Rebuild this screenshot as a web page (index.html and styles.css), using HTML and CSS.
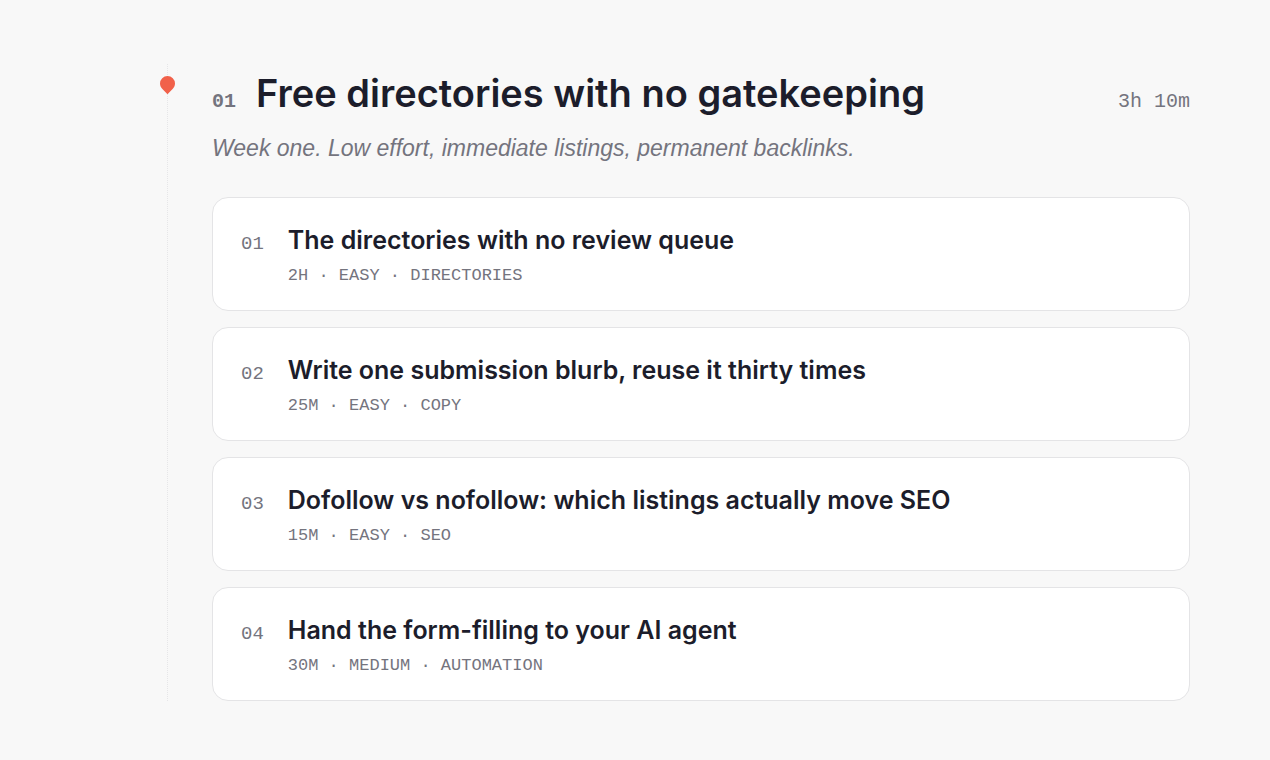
FILE: index.html
```
<!DOCTYPE html>
<html lang="en">
<head>
  <meta charset="UTF-8">
  <meta name="viewport" content="width=device-width, initial-scale=1.0">
  <title>Free directories with no gatekeeping</title>
  <link rel="stylesheet" href="styles.css">
</head>
<body>
  <main class="roadmap">
    <section class="stage">
      <div class="rail">
        <svg class="pin" width="15" height="19" viewBox="0 0 15 19" aria-hidden="true">
          <path d="M7.5 0A7.5 7.5 0 0 1 15 7.5C15 9.7 14.1 11.6 12.6 13L7.5 18.2L2.4 13C.9 11.6 0 9.7 0 7.5A7.5 7.5 0 0 1 7.5 0Z" fill="#f1614a"/>
        </svg>
      </div>
      <div class="content">
        <header class="stage-header">
          <span class="stage-number">01</span>
          <h1 class="stage-title">Free directories with no gatekeeping</h1>
          <span class="stage-time">3h 10m</span>
        </header>
        <p class="stage-intro">Week one. Low effort, immediate listings, permanent backlinks.</p>
        <div class="cards">
          <article class="card">
            <span class="card-number">01</span>
            <div>
              <h2 class="card-title">The directories with no review queue</h2>
              <p class="card-meta">2h · Easy · Directories</p>
            </div>
          </article>
          <article class="card">
            <span class="card-number">02</span>
            <div>
              <h2 class="card-title">Write one submission blurb, reuse it thirty times</h2>
              <p class="card-meta">25m · Easy · Copy</p>
            </div>
          </article>
          <article class="card">
            <span class="card-number">03</span>
            <div>
              <h2 class="card-title">Dofollow vs nofollow: which listings actually move SEO</h2>
              <p class="card-meta">15m · Easy · SEO</p>
            </div>
          </article>
          <article class="card">
            <span class="card-number">04</span>
            <div>
              <h2 class="card-title">Hand the form-filling to your AI agent</h2>
              <p class="card-meta">30m · Medium · Automation</p>
            </div>
          </article>
        </div>
      </div>
    </section>
  </main>
</body>
</html>
```
FILE: styles.css
```
:root {
  --bg: #f8f8f8;
  --line: #e4e4e6;
  --ink: #1c1d2b;
  --muted: #74747e;
  --heading: Inter, "Liberation Sans", sans-serif;
  --sans: "Liberation Sans", Arial, sans-serif;
  --mono: "Liberation Mono", monospace;
}
* {
  box-sizing: border-box;
}
body {
  margin: 0;
  background: var(--bg);
  color: var(--ink);
  font-family: var(--sans);
}
h1, h2, p {
  margin: 0;
}
h1, h2 {
  font-family: var(--heading);
  font-weight: 600;
}
.roadmap {
  padding: 64px 80px 58px 160px;
}

/* stage */
.stage {
  display: grid;
  grid-template-columns: 15px 1fr;
  column-gap: 37px;
}
.rail {
  padding-top: 12px;
  background: repeating-linear-gradient(to bottom, #e6e6e8 0 1px, transparent 1px 2px) center / 1px 100% no-repeat;
}
.pin {
  display: block;
}
.stage-header {
  display: flex;
  align-items: baseline;
  gap: 20px;
}
.stage-number {
  font: bold 20px/24px var(--mono);
  color: var(--muted);
}
.stage-title {
  font-size: 38px;
  line-height: 58px;
}
.stage-time {
  margin-left: auto;
  font: 20px/24px var(--mono);
  color: var(--muted);
}
.stage-intro {
  margin-top: 10px;
  font-size: 23px;
  font-style: italic;
  line-height: 32px;
  color: var(--muted);
}

/* cards */
.cards {
  display: grid;
  gap: 16px;
  margin-top: 33px;
}
.card {
  display: flex;
  align-items: baseline;
  gap: 24px;
  padding: 24px 28px 22px;
  background: #fff;
  border: 1px solid var(--line);
  border-radius: 16px;
}
.card-number {
  font: 19px/24px var(--mono);
  color: var(--muted);
}
.card-title {
  font-size: 25px;
  line-height: 36px;
}
.card-meta {
  margin-top: 6px;
  font: 17px/24px var(--mono);
  text-transform: uppercase;
  color: var(--muted);
}
```
